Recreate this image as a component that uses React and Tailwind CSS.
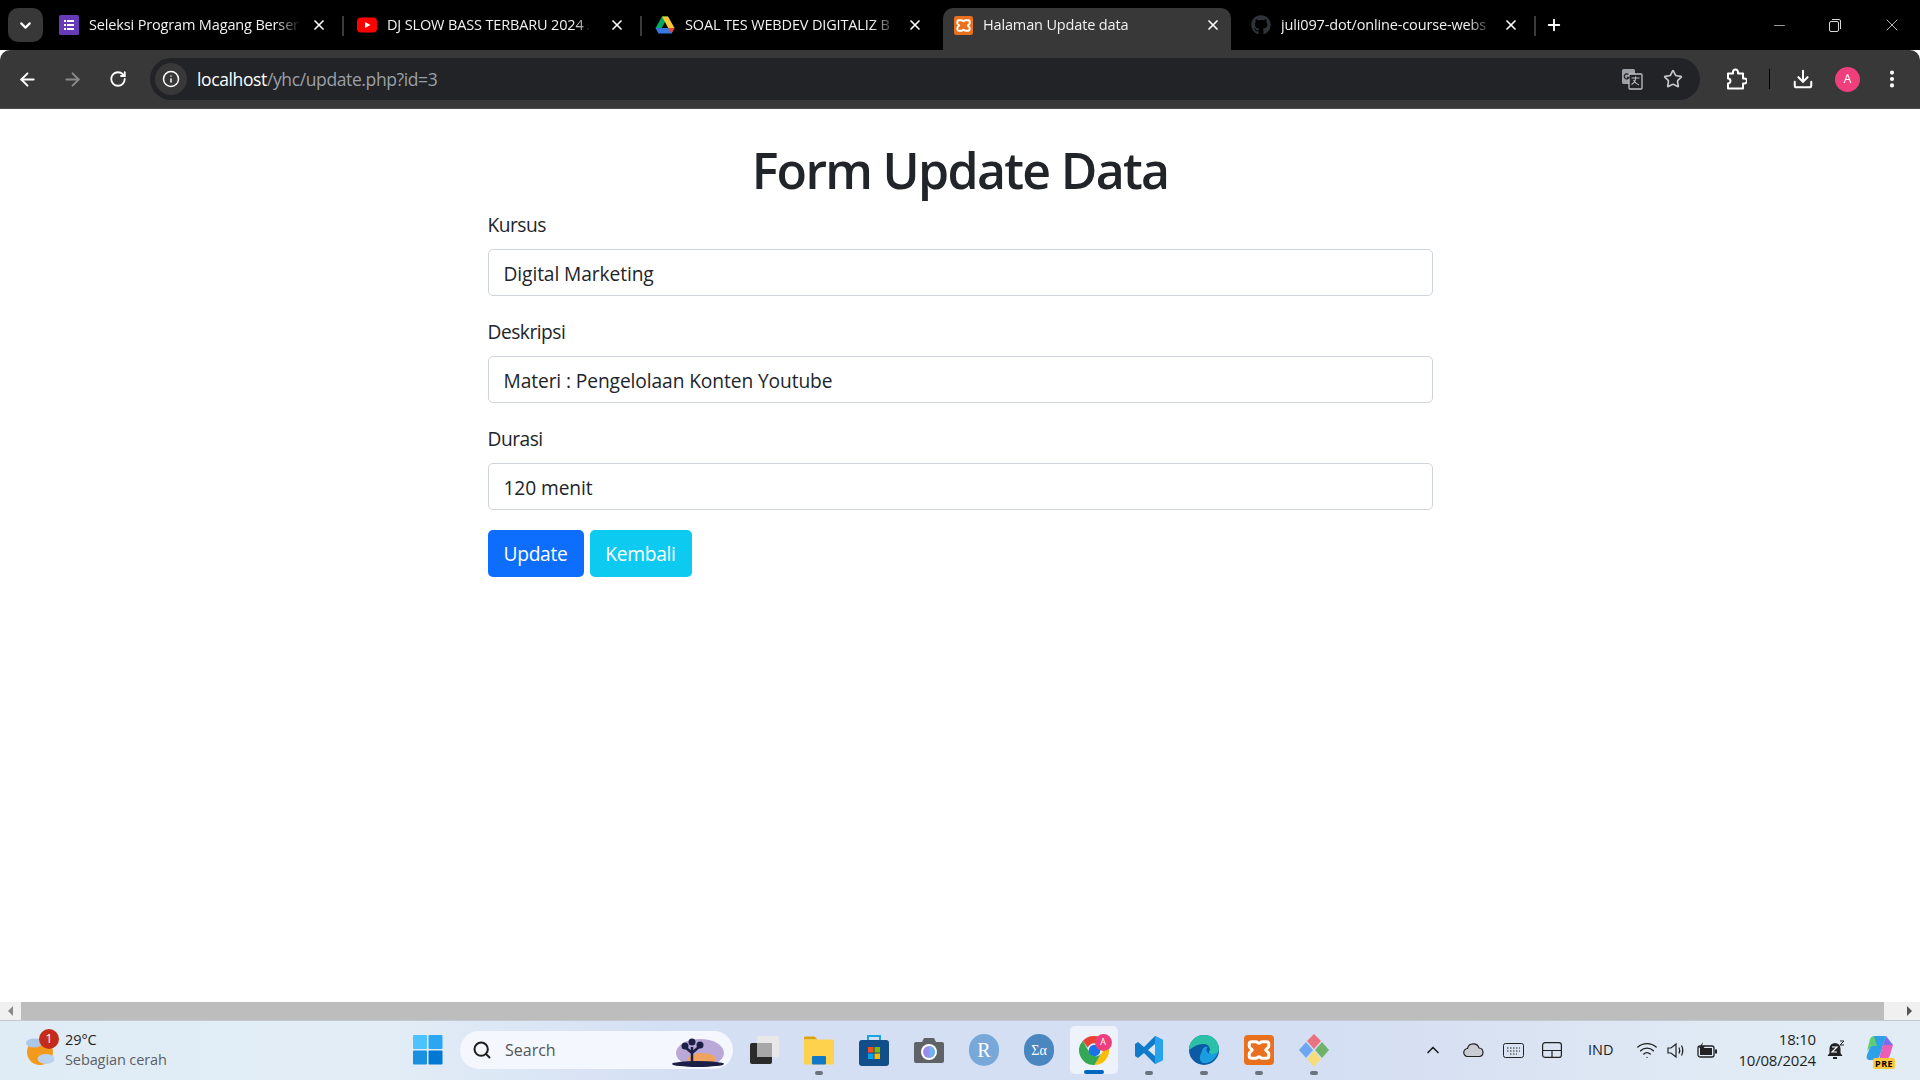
import React from "react";
import {
  ArrowLeft,
  ArrowRight,
  RotateCw,
  Info,
  Star,
  Download,
  Plus,
  X,
  Minus,
  ChevronDown,
  ChevronUp,
  Search,
  Wifi,
  EllipsisVertical,
} from "lucide-react";
import { FaGithub } from "react-icons/fa";

const XamppIcon = ({ size = 20 }) => (
  <svg width={size} height={size} viewBox="0 0 20 20">
    <rect width="20" height="20" rx="2.5" fill="#e8701f" />
    <path
      d="M5 4.5h3c1 0 1.2 1 2 1s1-1 2-1h3c1 0 1.5.6 1.5 1.5v1.500c0 1.500-2 1.800-2 2.500s2 1 2 2.500V14c0 1-.5 1.500-1.500 1.500h-3c-1 0-1.200-1-2-1s-1 1-2 1H5c-1 0-1.500-.5-1.500-1.500v-1.500c0-1.500 2-1.800 2-2.500s-2-1-2-2.500V6c0-.9.500-1.500 1.500-1.500z"
      fill="none"
      stroke="#fff"
      strokeWidth="2"
    />
  </svg>
);

const FormsIcon = () => (
  <svg width="20" height="20" viewBox="0 0 20 20">
    <rect width="20" height="20" rx="1.500" fill="#673ab7" />
    <g fill="#fff">
      <rect x="5" y="5" width="2" height="2" />
      <rect x="8" y="5" width="7" height="2" />
      <rect x="5" y="9" width="2" height="2" />
      <rect x="8" y="9" width="7" height="2" />
      <rect x="5" y="13" width="2" height="2" />
      <rect x="8" y="13" width="7" height="2" />
    </g>
  </svg>
);

const YoutubeIcon = () => (
  <svg width="20" height="20" viewBox="0 0 20 20">
    <rect y="2.500" width="20" height="15" rx="4" fill="#ff0000" />
    <path d="M8 7l5.500 3L8 13z" fill="#fff" />
  </svg>
);

const DriveIcon = () => (
  <svg width="20" height="20" viewBox="0 0 20 20">
    <path d="M7 1.500h6l-3.200 6-3.100 5.500H.5z" fill="#00a85d" />
    <path d="M7 1.500h6L19.500 13h-6.300z" fill="#fcc934" />
    <path d="M.5 13h19l-3 5.500h-13z" fill="#3777e3" />
    <path d="M19.500 13h-6.300l3.300 5.500z" fill="#ea4335" />
  </svg>
);

const TranslateIcon = () => (
  <svg width="22" height="22" viewBox="0 0 22 22">
    <rect x="1" y="1" width="13" height="15" rx="1.500" fill="#9aa0a6" />
    <rect x="8" y="6" width="13" height="15" rx="1" fill="#222327" stroke="#bdc1c6" strokeWidth="1.300" />
    <path d="M10.500 10h8M14.500 8.500V10c0 3-1.500 5-4 6.500M12.500 12c1 2 3 4 5.500 5" fill="none" stroke="#bdc1c6" strokeWidth="1.100" />
    <path d="M7.500 6.500a2.500 2.500 0 1 0 .5 3H6" fill="none" stroke="#222327" strokeWidth="1.300" />
  </svg>
);

const Tab = ({ icon, title, active, sep }) => (
  <div className="relative flex h-[42px] w-[298px] shrink-0 items-center pb-[8px] pl-[10px]">
    {active && <div className="absolute left-0 top-0 h-full w-[288px] rounded-t-[10px] bg-[#383838]" />}
    <div className="relative flex w-[270px] items-center">
      <div className="flex h-5 w-5 shrink-0 items-center justify-center">{icon}</div>
      <div className="ml-[10px] w-[212px] overflow-hidden whitespace-nowrap text-[14.500px] tracking-[-0.15px] text-[#f1f1f1] [mask-image:linear-gradient(to_right,black_88%,transparent_100%)]">
        {title}
      </div>
      <X size={16} strokeWidth={2.500} className="ml-[10px] shrink-0 text-white" />
    </div>
    {sep && <div className="absolute left-[293px] top-[8px] h-[20px] w-[2px] bg-[#3c3c3c]" />}
  </div>
);

const TabBar = () => (
  <div className="flex h-[50px] shrink-0 items-end bg-black">
    <div className="mb-[8px] ml-[8px] mr-[6px] flex h-[34px] w-[35px] items-center justify-center rounded-[10px] bg-[#383838]">
      <ChevronDown size={17} strokeWidth={3} className="text-white" />
    </div>
    <Tab icon={<FormsIcon />} title="Seleksi Program Magang Berser" sep />
    <Tab
      icon={<YoutubeIcon />}
      title={
        <>
          DJ SLOW BASS TERBARU 2024<span className="ml-[2px] text-[12px] text-[#5a4a4a]">♩</span>
        </>
      }
      sep
    />
    <Tab icon={<DriveIcon />} title="SOAL TES WEBDEV DIGITALIZ B" />
    <Tab icon={<XamppIcon size={19} />} title="Halaman Update data" active />
    <Tab icon={<FaGithub size={20} className="text-[#30343a]" />} title="juli097-dot/online-course-webs" sep />
    <Plus size={18} strokeWidth={2.500} className="mb-[16px] ml-[6px] shrink-0 text-white" />
    <div className="mb-[15px] ml-auto flex items-center gap-[39px] pr-[18px] text-[#d8d8d8]">
      <Minus size={17} strokeWidth={1} />
      <svg width="16" height="16" viewBox="0 0 16 16" fill="none" stroke="currentColor">
        <rect x="2.500" y="4.500" width="9" height="10" rx="1.500" />
        <path d="M5 2.500h7a1.500 1.500 0 0 1 1.500 1.500v8" />
      </svg>
      <X size={20} strokeWidth={1} />
    </div>
  </div>
);

const Toolbar = () => (
  <div className="flex h-[59px] shrink-0 items-center rounded-t-[10px] border-b border-[#4a4a4a] bg-[#383838]">
    <ArrowLeft size={21} strokeWidth={2.200} className="ml-[17px] text-white" />
    <ArrowRight size={21} strokeWidth={2.200} className="ml-[24px] text-[#8a8a8a]" />
    <RotateCw size={18} strokeWidth={2.400} className="ml-[26px] text-white" />
    <div className="ml-[23px] flex h-[42px] w-[1550px] items-center rounded-full bg-[#222327]">
      <div className="ml-[5px] flex h-[32px] w-[32px] items-center justify-center rounded-full bg-[#383838]">
        <Info size={18} strokeWidth={2} className="text-white" />
      </div>
      <div className="ml-[10px] text-[17.500px] tracking-[-0.38px] text-[#9aa0a6]">
        <span className="text-white">localhost</span>/yhc/update.php?id=3
      </div>
      <div className="ml-auto flex items-center gap-[20px] pr-[17px]">
        <TranslateIcon />
        <Star size={20} strokeWidth={2} className="text-[#c4c7c5]" />
      </div>
    </div>
    <svg className="ml-[25px]" width="22" height="22" viewBox="0 0 22 22" fill="none" stroke="#fff" strokeWidth="2" strokeLinejoin="round">
      <path d="M3 5.500h5V4a2.500 2.500 0 0 1 5 0v1.500h5v5h1.500a2.500 2.500 0 0 1 0 5H18v5H3v-5a2.500 2.500 0 0 0 0-5z" />
    </svg>
    <div className="ml-[22px] h-[20px] w-[1px] bg-black" />
    <Download size={22} strokeWidth={2.200} className="ml-[22px] text-white" />
    <div className="ml-[21px] flex h-[25px] w-[25px] items-center justify-center rounded-full bg-[#ee3f7c] text-[12px] text-white">
      A
    </div>
    <EllipsisVertical size={22} strokeWidth={2.500} className="ml-[21px] text-white" />
  </div>
);

const Field = ({ label, value }) => (
  <div className="mb-[21px]">
    <label className="mb-[10px] block h-[29px] text-[19.200px] leading-[29px] tracking-[-0.5px] text-[#212529]">{label}</label>
    <input
      type="text"
      readOnly
      value={value}
      className="block h-[47px] w-full rounded-[5px] border border-[#ced4da] bg-white px-[15px] pt-[2px] text-[19.200px] tracking-[-0.1px] text-[#212529] outline-none"
    />
  </div>
);

const UpdateForm = () => (
  <div className="mx-auto w-[945px]">
    <h1 className="mb-[8px] mt-[28px] h-[65px] text-center text-[50px] font-semibold leading-[66px] tracking-[-1.700px] text-[#212529]">
      Form Update Data
    </h1>
    <Field label="Kursus" value="Digital Marketing" />
    <Field label="Deskripsi" value="Materi : Pengelolaan Konten Youtube" />
    <Field label="Durasi" value="120 menit" />
    <div className="-mt-px flex gap-[6px]">
      <button className="h-[47px] w-[96px] rounded-[5px] bg-[#0d6efd] pt-[2px] text-[19.200px] tracking-[-0.3px] text-white">Update</button>
      <button className="h-[47px] w-[102px] rounded-[5px] bg-[#0dcaf0] pt-[2px] text-[19.200px] tracking-[-0.3px] text-white">Kembali</button>
    </div>
  </div>
);

const Scrollbar = () => (
  <div className="flex h-[19px] shrink-0 border-b border-[#c4c8d0] bg-[#f0f0f0]">
    <div className="flex w-[21px] items-center justify-center">
      <div className="h-0 w-0 border-y-[5px] border-r-[5px] border-y-transparent border-r-[#888]" />
    </div>
    <div className="h-full w-[1863px] bg-[#bdbdbd]" />
    <div className="flex flex-1 items-center justify-end pr-[8px]">
      <div className="h-0 w-0 border-y-[5px] border-l-[5px] border-y-transparent border-l-[#555]" />
    </div>
  </div>
);

const TaskIcon = ({ children, dot, active }) => (
  <div className={`relative flex h-[48px] w-[48px] items-center justify-center rounded-[5px] ${active ? "bg-[#eef2fb]" : ""}`}>
    {children}
    {dot && <div className="absolute bottom-[-1px] left-[20px] h-[4px] w-[8px] rounded-full bg-[#6b7280]" />}
    {active && <div className="absolute bottom-0 left-[14px] h-[4px] w-[20px] rounded-full bg-[#0067c0]" />}
  </div>
);

const Taskbar = () => (
  <div className="flex h-[59px] shrink-0 items-center bg-[linear-gradient(90deg,#e0ecf5_0%,#e2edf6_20%,#d5dff4_35%,#d5dff3_70%,#d9e2f2_78%,#e0ebf5_90%,#e1ecf5_100%)] pb-[1px] text-[#1f1f1f]">
    <div className="relative ml-[25px] flex w-[388px] items-center">
      <svg width="32" height="36" viewBox="0 0 32 36">
        <circle cx="15" cy="20" r="13" fill="#f39a1c" />
        <ellipse cx="9" cy="11" rx="8" ry="4.500" fill="#a9c8ea" />
        <ellipse cx="21" cy="27" rx="8.500" ry="5" fill="#b9d3ef" />
      </svg>
      <div className="absolute left-[14px] top-[-1px] flex h-[20px] w-[20px] items-center justify-center rounded-full bg-[#c42b1c] text-[13px] text-white">
        1
      </div>
      <div className="ml-[8px] text-[14.500px] leading-[20px] tracking-[-0.1px]">
        <div>29°C</div>
        <div className="text-[#5b5f66]">Sebagian cerah</div>
      </div>
    </div>
    <svg width="30" height="30" viewBox="0 0 30 30">
      <rect width="14" height="14" rx="1" fill="#4cc2ff" />
      <rect x="15.500" width="14" height="14" rx="1" fill="#2aa7f0" />
      <rect y="15.500" width="14" height="14" rx="1" fill="#1b8fe0" />
      <rect x="15.500" y="15.500" width="14" height="14" rx="1" fill="#0078d4" />
    </svg>
    <div className="ml-[17px] flex h-[38px] w-[273px] items-center rounded-full bg-[#f4f7fd] pl-[12px]">
      <Search size={20} strokeWidth={2.400} className="text-[#1f1f1f]" />
      <span className="ml-[13px] text-[16px] text-[#555]">Search</span>
      <svg className="ml-auto mr-[7px]" width="56" height="34" viewBox="0 0 56 34">
        <ellipse cx="30" cy="20" rx="24" ry="14" fill="#b9a8d8" />
        <ellipse cx="32" cy="26" rx="14" ry="6" fill="#f0a35e" />
        <ellipse cx="28" cy="31" rx="26" ry="3" fill="#1c1f45" />
        <path d="M22 30V14M22 20l-7-6M22 20l8-7" stroke="#1c1f45" strokeWidth="2.500" />
        <circle cx="15" cy="13" r="3.500" fill="#1c1f45" />
        <circle cx="22" cy="9" r="3.500" fill="#1c1f45" />
        <circle cx="30" cy="12" r="3.500" fill="#1c1f45" />
      </svg>
    </div>
    <div className="ml-[7px] flex items-center gap-[7px]">
      <TaskIcon>
        <svg width="32" height="32" viewBox="0 0 32 32">
          <rect x="2" y="9" width="22" height="21" rx="2" fill="#2b2b2b" />
          <rect x="9" y="2" width="22" height="21" rx="2" fill="#e8e8e8" />
          <rect x="9" y="9" width="15" height="14" fill="#a8a8a8" />
        </svg>
      </TaskIcon>
      <TaskIcon dot>
        <svg width="30" height="30" viewBox="0 0 30 30">
          <path d="M0 3a1.500 1.500 0 0 1 1.500-1.500h9l3 3H0z" fill="#e0a100" />
          <rect y="4.500" width="30" height="25" rx="1.500" fill="#ffd24d" />
          <rect x="8" y="21" width="14" height="8.500" rx="1" fill="#0f78c8" />
        </svg>
      </TaskIcon>
      <TaskIcon>
        <svg width="30" height="32" viewBox="0 0 30 32">
          <path d="M9 7V2h12v5" fill="none" stroke="#19a5e0" strokeWidth="2" />
          <rect y="6" width="30" height="26" rx="3" fill="#124e89" />
          <rect x="9" y="13" width="5.500" height="5.500" fill="#f25022" />
          <rect x="15.500" y="13" width="5.500" height="5.500" fill="#7fba00" />
          <rect x="9" y="19.500" width="5.500" height="5.500" fill="#00a4ef" />
          <rect x="15.500" y="19.500" width="5.500" height="5.500" fill="#ffb900" />
        </svg>
      </TaskIcon>
      <TaskIcon>
        <svg width="30" height="26" viewBox="0 0 30 26">
          <path d="M2 5h6l2-4h10l2 4h6a2 2 0 0 1 2 2v17a2 2 0 0 1-2 2H2a2 2 0 0 1-2-2V7a2 2 0 0 1 2-2z" fill="#5f6368" />
          <circle cx="15" cy="15" r="8" fill="#fff" />
          <circle cx="15" cy="15" r="6" fill="#9a8cec" />
          <path d="M15 9a6 6 0 0 1 0 12z" fill="#6fb4f0" />
        </svg>
      </TaskIcon>
      <TaskIcon>
        <div className="flex h-[32px] w-[30px] items-center justify-center rounded-full bg-[#78a8da] font-['Liberation_Serif',serif] text-[20px] text-white">
          R
        </div>
      </TaskIcon>
      <TaskIcon>
        <div className="flex h-[32px] w-[30px] items-center justify-center rounded-full bg-[#4a86c0] font-['Liberation_Serif',serif] text-[14px] text-white">
          Σα
        </div>
      </TaskIcon>
      <TaskIcon active>
        <div className="relative">
          <svg width="31" height="31" viewBox="0 0 32 32">
            <path d="M16 1a15 15 0 0 1 13 7.500H16a7.500 7.500 0 0 0-7 4.700L4 6a15 15 0 0 1 12-5z" fill="#ea4335" />
            <path d="M29 8.500A15 15 0 0 1 16 31l6.500-11.200A7.500 7.500 0 0 0 22 8.500z" fill="#fbbc05" />
            <path d="M4 6l6.500 11.500A7.500 7.500 0 0 0 22.500 19.800L16 31A15 15 0 0 1 4 6z" fill="#34a853" />
            <circle cx="16" cy="16" r="6" fill="#1a73e8" />
          </svg>
          <div className="absolute right-[-2px] top-[-1px] flex h-[17px] w-[17px] items-center justify-center rounded-full bg-[#ee3f7c] text-[9px] text-white">
            A
          </div>
        </div>
      </TaskIcon>
      <TaskIcon dot>
        <svg width="30" height="30" viewBox="0 0 30 30">
          <path d="M21 1l8 4v20l-8 4-11-11-6 5-3-2V9l3-2 6 5z" fill="#0e7ccb" />
          <path d="M21 1l8 4v20l-8 4z" fill="#26a4ee" />
          <path d="M21 9l-7 6 7 6z" fill="#dfe6f4" />
        </svg>
      </TaskIcon>
      <TaskIcon dot>
        <svg width="30" height="30" viewBox="0 0 30 30">
          <circle cx="15" cy="15" r="15" fill="#0c59a4" />
          <path d="M0 15C0 6 7 0 15 0c9 0 15 6 15 14 0 5-5 6-8 5-3 0-2-3-1-4 0-4-3-6-7-6-6 0-11 4-14 6z" fill="#2bc0a8" />
          <path d="M13 16c0-3 3-5 6-4-2 1-2 4 0 6 3 2 7 1 10-1-2 7-8 12-15 11-5-2-3-8-1-12z" fill="#1b9de2" />
        </svg>
      </TaskIcon>
      <TaskIcon dot>
        <XamppIcon size={30} />
      </TaskIcon>
      <TaskIcon dot>
        <svg width="32" height="34" viewBox="0 0 32 34">
          <path d="M16 1l7 7-7 8-7-8z" fill="#e8737f" />
          <path d="M8 9l7 8-7 8-7-8z" fill="#6ea6f5" />
          <path d="M24 9l7 8-7 8-7-8z" fill="#6fb36a" />
          <path d="M16 18l7 8-7 8-7-8z" fill="#f6dc7a" />
        </svg>
      </TaskIcon>
    </div>
    <div className="ml-[85px] flex items-center text-[#1f1f1f]">
      <ChevronUp size={20} strokeWidth={2} />
      <svg className="ml-[20px]" width="21" height="14" viewBox="0 0 21 14">
        <path d="M5 13.500a4 4 0 0 1-.5-8A6 6 0 0 1 16 5a4.300 4.300 0 0 1 .5 8.500z" fill="#c9ccd2" stroke="#222" strokeWidth="1.200" />
      </svg>
      <svg className="ml-[19px]" width="21" height="15" viewBox="0 0 21 15" fill="none" stroke="#222">
        <rect x=".5" y=".5" width="20" height="14" rx="2" />
        <path d="M4 5h13M4 8h13M7 11h7" strokeDasharray="1.500 1.500" />
      </svg>
      <svg className="ml-[18px]" width="20" height="16" viewBox="0 0 20 16" fill="none" stroke="#222" strokeWidth="1.200">
        <rect x=".6" y=".6" width="18.800" height="14.800" rx="2.500" />
        <path d="M.6 8.500h18.800M10 8.500v7" />
      </svg>
      <span className="ml-[26px] w-[26px] text-[14.500px]">IND</span>
      <Wifi size={22} strokeWidth={1.500} className="ml-[22px]" />
      <svg className="ml-[9px]" width="20" height="17" viewBox="0 0 20 17" fill="none" stroke="#222" strokeWidth="1.200">
        <path d="M1 6h3l5-4v13l-5-4H1z" />
        <path d="M12 5.500c1 2 1 4 0 6M14.500 3.500c1.500 3 1.500 7 0 10" />
      </svg>
      <svg className="ml-[10px]" width="21" height="16" viewBox="0 0 21 16">
        <rect x="1" y="4" width="16" height="11" rx="2" fill="none" stroke="#222" strokeWidth="1.300" />
        <rect x="3" y="6" width="12" height="7" fill="#222" />
        <rect x="18" y="7.500" width="2" height="4" fill="#222" />
        <path d="M6 0L2 6h3l-1 4 4-6H5z" fill="#222" />
      </svg>
      <div className="ml-[8px] w-[90px] text-right text-[15px] leading-[21px] tracking-[-0.2px]">
        <div>18:10</div>
        <div>10/08/2024</div>
      </div>
      <svg className="ml-[11px]" width="18" height="21" viewBox="0 0 18 21">
        <path d="M8 3a5.500 5.500 0 0 1 5.500 5.500V13l2 3h-15l2-3V8.500A5.500 5.500 0 0 1 8 3z" fill="#222" />
        <rect x="6" y="17" width="4" height="2" fill="#222" />
        <path d="M5 7h5l-5 5h5" fill="none" stroke="#fff" strokeWidth="1.200" />
        <path d="M13 1h4l-4 4h4" fill="none" stroke="#222" strokeWidth="1" />
      </svg>
      <div className="relative ml-[21px] h-[30px] w-[30px]">
        <svg width="29" height="26" viewBox="0 0 29 26">
          <path d="M8 1h12L14 20c-1 3-3 5-6 5H4c-3 0-4-2-3-5z" fill="#2ea0e8" />
          <path d="M14 20l3-10h10l-3 10c-1 3-3 5-6 5h-7c2-1 3-3 3-5z" fill="#e85fb5" />
          <path d="M8 1c-2 0-3 1-4 3L1 16c3-5 7-6 10-5z" fill="#5fce72" />
          <path d="M20 1l-3 9h10z" fill="#7c6cf0" />
        </svg>
        <div className="absolute bottom-[-4px] left-[7px] rounded-[2px] bg-[#ffc83d] px-[2px] text-[9px] font-bold leading-[11px] tracking-[0.5px] text-black">
          PRE
        </div>
      </div>
    </div>
  </div>
);

export default function App() {
  return (
    <div className="flex h-screen w-full flex-col overflow-hidden bg-white font-['Open_Sans','Liberation_Sans',sans-serif]">
      <TabBar />
      <Toolbar />
      <div className="flex-1 overflow-hidden bg-white">
        <UpdateForm />
      </div>
      <Scrollbar />
      <Taskbar />
    </div>
  );
}
